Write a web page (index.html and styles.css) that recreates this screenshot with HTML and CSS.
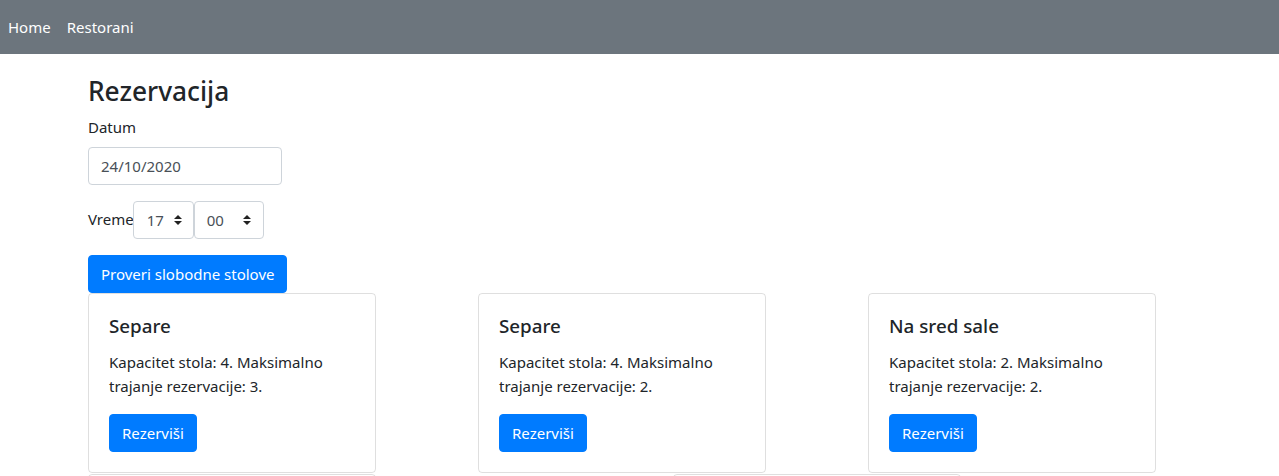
FILE: index.html
```html
<!DOCTYPE html>
<html lang="sr">
<head>
<meta charset="utf-8">
<title>Rezervacija</title>
<link rel="stylesheet" href="styles.css">
</head>
<body>
<nav class="navbar">
  <a class="nav-link" href="#">Home</a>
  <a class="nav-link" href="#">Restorani</a>
</nav>
<main class="page">
  <h3 class="title">Rezervacija</h3>
  <div class="form-group">
    <label class="label">Datum</label>
    <div class="input">24/10/2020</div>
  </div>
  <div class="form-group time-row">
    <span class="label-inline">Vreme</span>
    <div class="select sel-h"><span>17</span><svg class="arrows" width="8" height="10" viewBox="0 0 8 10"><path d="M4 0 L8 4 L0 4 Z M4 10 L8 6 L0 6 Z" fill="#222"/></svg></div>
    <div class="select sel-m"><span>00</span><svg class="arrows" width="8" height="10" viewBox="0 0 8 10"><path d="M4 0 L8 4 L0 4 Z M4 10 L8 6 L0 6 Z" fill="#222"/></svg></div>
  </div>
  <button class="btn btn-main">Proveri slobodne stolove</button>
  <div class="cards row-1">
    <div class="card">
      <h5 class="card-title">Separe</h5>
      <p class="card-text">Kapacitet stola: 4. Maksimalno trajanje rezervacije: 3.</p>
      <button class="btn">Rezerviši</button>
    </div>
    <div class="card">
      <h5 class="card-title">Separe</h5>
      <p class="card-text">Kapacitet stola: 4. Maksimalno trajanje rezervacije: 2.</p>
      <button class="btn">Rezerviši</button>
    </div>
    <div class="card">
      <h5 class="card-title">Na sred sale</h5>
      <p class="card-text">Kapacitet stola: 2. Maksimalno trajanje rezervacije: 2.</p>
      <button class="btn">Rezerviši</button>
    </div>
  </div>
  <div class="cards row-2">
    <div class="card card-empty"></div>
    <div class="card card-empty"></div>
  </div>
</main>
</body>
</html>
```
FILE: styles.css
```css
html, body {
  margin: 0;
  padding: 0;
}
body {
  font-family: "Noto Sans", "Open Sans", sans-serif;
  font-size: 15px;
  line-height: 24px;
  color: #212529;
  background: #fff;
  overflow: hidden;
}
.navbar {
  height: 54px;
  background: #6c757d;
  display: flex;
  align-items: center;
  padding: 0 8px 1px 8px;
  box-sizing: border-box;
  gap: 16px;
}
.nav-link {
  color: #fff;
  text-decoration: none;
  font-size: 15px;
}
.page {
  padding: 19px 0 0 88px;
}
.title {
  font-size: 26.3px;
  font-weight: 500;
  line-height: 33.6px;
  margin: 2px 0 6px 0;
}
.form-group {
  margin-bottom: 16px;
}
.label {
  display: block;
  margin-bottom: 8px;
}
.input {
  width: 194px;
  height: 38px;
  box-sizing: border-box;
  border: 1px solid #ced4da;
  border-radius: 4px;
  padding: 6px 12px;
  color: #495057;
  display: flex;
  align-items: center;
}
.time-row {
  display: flex;
  align-items: flex-start;
}
.label-inline {
  margin-top: 6px;
  margin-right: -1px;
}
.select {
  height: 38px;
  box-sizing: border-box;
  border: 1px solid #ced4da;
  border-radius: 4px;
  display: flex;
  align-items: center;
  justify-content: space-between;
  color: #495057;
}
.sel-h {
  width: 61px;
  padding: 0 11px 0 13px;
}
.sel-m {
  width: 70px;
  padding: 0 12px 0 12px;
}
.btn {
  display: inline-block;
  font-family: inherit;
  font-size: 15px;
  line-height: 24px;
  color: #fff;
  background: #007bff;
  border: 1px solid #007bff;
  border-radius: 4px;
  padding: 6px 12px;
  height: 38px;
  cursor: pointer;
}
.btn-main {
  display: block;
}
.cards {
  display: flex;
  width: 1068px;
}
.row-1 {
  justify-content: space-between;
}
.row-2 {
  gap: 297px;
  margin-top: 1px;
}
.card {
  width: 288px;
  box-sizing: border-box;
  border: 1px solid rgba(0, 0, 0, 0.125);
  border-radius: 4px;
  padding: 20px;
}
.card-empty {
  height: 180px;
}
.card-title {
  font-size: 18.8px;
  font-weight: 500;
  line-height: 24px;
  margin: 0 0 12px 0;
}
.card-text {
  margin: 0 0 16px 0;
}
```
